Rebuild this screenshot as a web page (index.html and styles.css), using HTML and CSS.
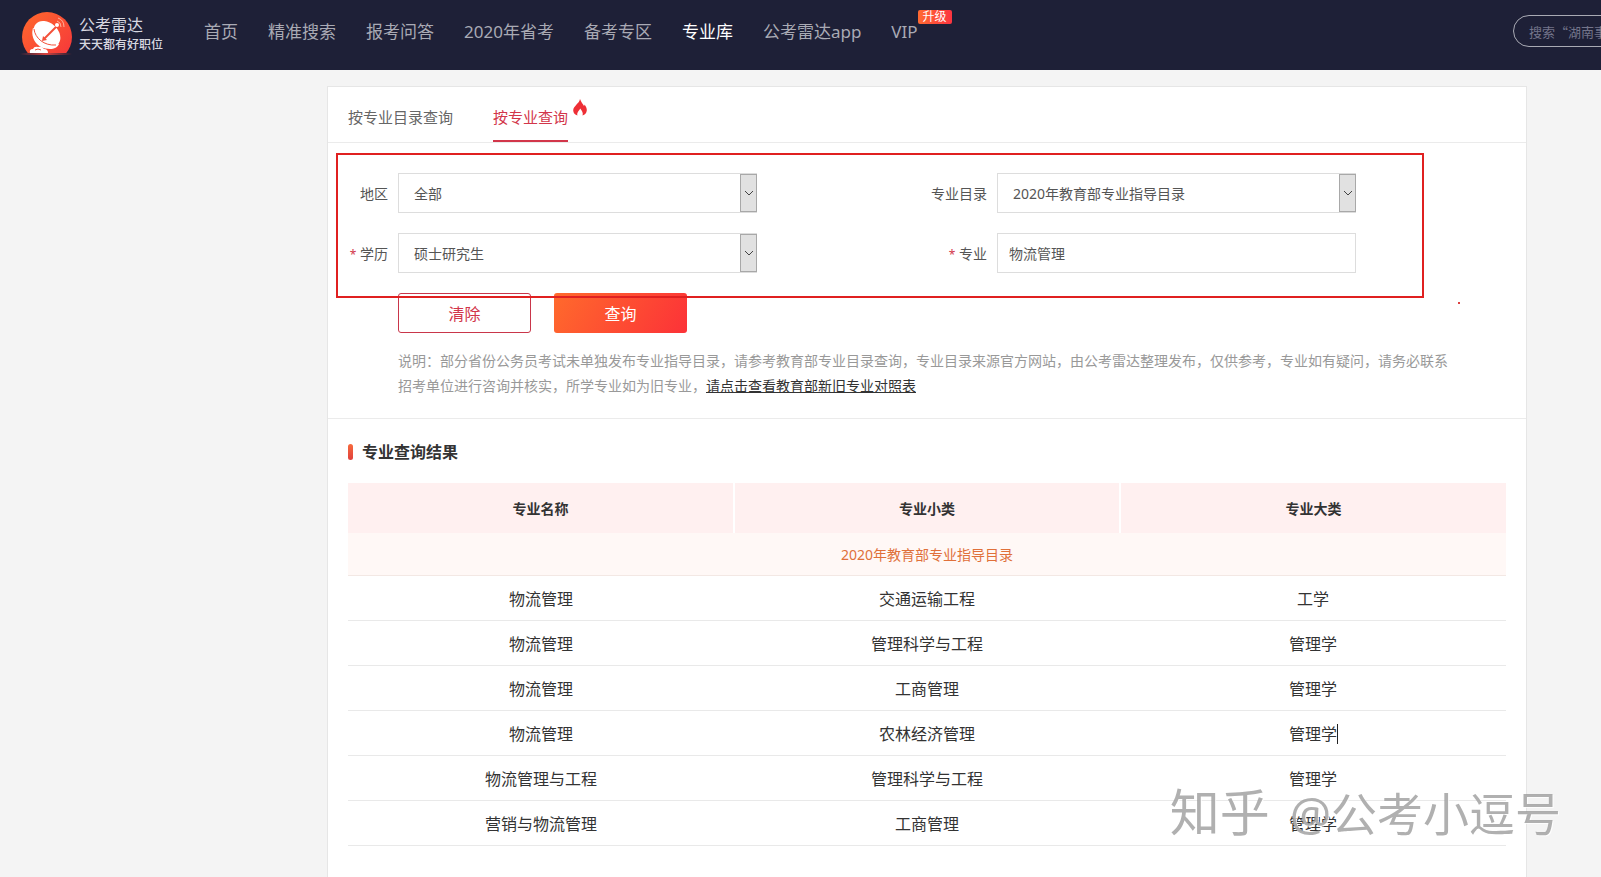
FILE: index.html
```html
<!DOCTYPE html>
<html lang="zh-CN">
<head>
<meta charset="utf-8">
<title>专业库 - 公考雷达</title>
<link rel="stylesheet" href="styles.css">
</head>
<body>
<header class="header">
  <a class="logo" href="#">
    <svg class="logo-mark" width="54" height="46" viewBox="0 0 54 46">
      <defs>
        <linearGradient id="sun" x1="0" y1="0" x2="1" y2="1"><stop offset="0" stop-color="#ff6a2c"/><stop offset="1" stop-color="#f5333c"/></linearGradient>
        <clipPath id="horizon"><rect width="54" height="41"/></clipPath>
      </defs>
      <g clip-path="url(#horizon)">
        <circle cx="27" cy="25" r="25" fill="url(#sun)"/>
        <path d="M10 41Q9 37 13 37Q14 34 18 35Q22 34 24 37Q28 37 28 41Z" fill="#fff"/>
        <path d="M15 38Q18 36 21 38" fill="none" stroke="#f4513a"/>
        <path d="M13 16C10 26 17 37 30 37C34 37 38 35 39 32Z" fill="#fff"/>
        <ellipse cx="27" cy="22" rx="15" ry="11" transform="rotate(42 27 22)" fill="#fff"/>
        <path d="M14 17C15 26 24 34 36 33" fill="none" stroke="#f4513a" stroke-width="1"/>
        <path d="M24 27L37 14" stroke="#f4513a" stroke-width="2"/>
        <path d="M23 24L27 28L22 29Z" fill="#f4513a"/>
        <circle cx="37" cy="13" r="2" fill="#fff"/>
        <path d="M37 9Q41 10 41 15M38 6Q44 8 44 15" fill="none" stroke="#ffb49c" stroke-width="1"/>
      </g>
      <path d="M0 42L26 41L52 42L26 43Z" fill="#d9433f"/>
    </svg>
    <span class="logo-text"><span class="logo-name">公考雷达</span><span class="logo-slogan">天天都有好职位</span></span>
  </a>
  <nav class="nav">
    <a href="#">首页</a>
    <a href="#">精准搜索</a>
    <a href="#">报考问答</a>
    <a href="#">2020年省考</a>
    <a href="#">备考专区</a>
    <a class="active" href="#">专业库</a>
    <a href="#">公考雷达app</a>
    <a class="vip" href="#">VIP<span class="badge">升级</span></a>
  </nav>
  <input class="search" type="search" aria-label="搜索" placeholder="搜索“湖南事业单位”">
</header>

<main class="card">
  <div class="tabs">
    <a class="tab" href="#">按专业目录查询</a>
    <a class="tab tab-active" href="#">按专业查询
      <svg class="fire" width="14" height="17" viewBox="0 0 14 17"><path d="M7 0C8 3 10 5 11 7C11.500 6.500 11.500 6 11.500 5.500C13 7.500 14 9.500 13.800 11.500C13.500 14 12 16 9.500 16.500C10.500 14 9 12 7.200 9.500C6 12 3.500 13.500 4.500 16.500C2 15.800 .3 14 .2 11.500C.1 9 2 7.500 3.500 5.500C5 4 6.500 2.500 7 0Z" fill="#ee2f36"/></svg>
    </a>
  </div>

  <form class="query">
    <div class="fields">
      <div class="field">
        <label for="area">地区</label>
        <span class="control select"><select id="area"><option>全部</option></select><span class="arrow"><svg width="10" height="6" viewBox="0 0 10 6"><path d="M1 1L5 5L9 1" fill="none" stroke="#444"/></svg></span></span>
      </div>
      <div class="field">
        <label for="catalog">专业目录</label>
        <span class="control select"><select id="catalog"><option>2020年教育部专业指导目录</option></select><span class="arrow"><svg width="10" height="6" viewBox="0 0 10 6"><path d="M1 1L5 5L9 1" fill="none" stroke="#444"/></svg></span></span>
      </div>
      <div class="field">
        <label for="degree"><span class="required">*</span> 学历</label>
        <span class="control select"><select id="degree"><option>硕士研究生</option></select><span class="arrow"><svg width="10" height="6" viewBox="0 0 10 6"><path d="M1 1L5 5L9 1" fill="none" stroke="#444"/></svg></span></span>
      </div>
      <div class="field">
        <label for="major"><span class="required">*</span> 专业</label>
        <span class="control"><input id="major" type="text" value="物流管理"></span>
      </div>
    </div>
    <div class="actions">
      <button class="btn btn-clear" type="reset">清除</button>
      <button class="btn btn-query" type="button">查询</button>
    </div>
    <p class="note">说明：部分省份公务员考试未单独发布专业指导目录，请参考教育部专业目录查询，专业目录来源官方网站，由公考雷达整理发布，仅供参考，专业如有疑问，请务必联系招考单位进行咨询并核实，所学专业如为旧专业，<a href="#">请点击查看教育部新旧专业对照表</a></p>
    <span class="highlight"></span>
    <span class="dot"></span>
  </form>

  <section class="results">
    <h2>专业查询结果</h2>
    <table>
      <thead>
        <tr><th>专业名称</th><th>专业小类</th><th>专业大类</th></tr>
      </thead>
      <tbody>
        <tr class="group"><td colspan="3">2020年教育部专业指导目录</td></tr>
        <tr><td>物流管理</td><td>交通运输工程</td><td>工学</td></tr>
        <tr><td>物流管理</td><td>管理科学与工程</td><td>管理学</td></tr>
        <tr><td>物流管理</td><td>工商管理</td><td>管理学</td></tr>
        <tr><td>物流管理</td><td>农林经济管理</td><td><span class="caret">管理学</span></td></tr>
        <tr><td>物流管理与工程</td><td>管理科学与工程</td><td>管理学</td></tr>
        <tr><td>营销与物流管理</td><td>工商管理</td><td>管理学</td></tr>
      </tbody>
    </table>
  </section>
</main>
<div class="watermark"><span class="watermark-site">知乎</span> @公考小逗号</div>
</body>
</html>
```
FILE: styles.css
```css
* { box-sizing: border-box; }
body {
  margin: 0;
  min-height: 100vh;
  display: flex;
  flex-direction: column;
  overflow: hidden;
  background: #f4f4f4;
  color: #333;
  font: 14px/20px "Noto Sans", "Noto Sans CJK SC", sans-serif;
}
a { color: inherit; text-decoration: none; }
input, select, button { font: inherit; color: inherit; }

.header {
  display: flex;
  align-items: flex-start;
  height: 70px;
  padding-left: 20px;
  background: #1e2037;
  overflow: hidden;
}
.logo { display: flex; gap: 5px; padding-top: 12px; width: 184px; flex: none; }
.logo-mark { flex: none; }
.logo-text { display: flex; flex-direction: column; padding-top: 3px; color: #d8d8e0; }
.logo-name { font-size: 16px; line-height: 20px; }
.logo-slogan { font-size: 12px; line-height: 20px; font-weight: 500; }
.nav { display: flex; gap: 30px; flex: none; font-size: 17px; line-height: 64px; color: #a9aab4; }
.nav .active { color: #fff; }
.vip { position: relative; }
.badge {
  position: absolute;
  left: 100%;
  top: 10px;
  width: 34px;
  border-radius: 2px;
  background: linear-gradient(90deg, #ff6a32, #fc3440);
  color: #fff;
  font-size: 12px;
  line-height: 14px;
  text-align: center;
}
.search {
  flex: none;
  width: 240px;
  height: 32px;
  margin: 15px -152px 0 auto;
  padding: 0 15px;
  border: 1px solid #a9aab4;
  border-radius: 16px;
  background: transparent;
  font: 13px/20px "Noto Sans CJK SC", sans-serif;
}
.search::placeholder { color: #73748a; }

.card {
  flex: 1;
  max-width: 1200px;
  width: 75%;
  margin: 16px 0 0 327px;
  border: 1px solid #e6e6e6;
  border-bottom: 0;
  background: #fff;
}
.tabs {
  display: flex;
  gap: 40px;
  padding: 0 20px;
  height: 56px;
  border-bottom: 1px solid #ebebeb;
  font-size: 15px;
  line-height: 60px;
  color: #666;
}
.tab { height: 55px; }
.tab-active { position: relative; color: #d2364a; border-bottom: 2px solid #d2364a; }
.fire { position: absolute; left: calc(100% + 5px); top: 12px; }

.query { position: relative; padding: 30px 0 20px; border-bottom: 1px solid #ebebeb; }
.fields { display: grid; grid-template-columns: 1fr 1fr; gap: 20px 0; }
.field { display: flex; align-items: center; gap: 10px; color: #555; }
.field label { width: 60px; padding-top: 2px; text-align: right; white-space: nowrap; }
.required { color: #d2364a; font-size: 12px; }
.control { position: relative; width: 60%; height: 40px; }
.control select, .control input {
  display: block;
  width: 100%;
  height: 100%;
  padding: 2px 24px 0 15px;
  border: 1px solid #ddd;
  border-radius: 0;
  background: #fff;
  appearance: none;
}
.control input { padding: 0 11px; }
.arrow {
  position: absolute;
  right: 0;
  top: 1px;
  bottom: 1px;
  width: 17px;
  display: flex;
  align-items: center;
  justify-content: center;
  border: 1px solid #a8a8a8;
  background: #e1e1e1;
  pointer-events: none;
}
.actions { display: flex; gap: 23px; margin: 20px 0 0 70px; }
.btn { width: 133px; height: 40px; padding: 2px 0 0; border-radius: 3px; font-size: 16px; }
.btn-clear { border: 1px solid #c9364a; background: #fff; color: #d2364a; }
.btn-query { border: 0; background: linear-gradient(120deg, #ff6a2c, #fc3238); color: #fff; }
.note { max-width: 1060px; margin: 15px 0 0 70px; line-height: 25px; color: #999; font-family: "Noto Sans CJK SC", sans-serif; }
.note a { color: #333; text-decoration: underline; }
.highlight { position: absolute; left: 8px; right: 102px; top: 10px; height: 145px; border: 2px solid #e02020; pointer-events: none; }
.dot { position: absolute; right: 66px; top: 159px; width: 2px; height: 2px; background: #dc4040; }

.results { padding: 20px; }
.results h2 { display: flex; align-items: center; gap: 9px; margin: 0 0 18px; font-size: 16px; line-height: 26px; font-weight: 600; }
.results h2::before { content: ""; width: 5px; height: 16px; border-radius: 3px; background: linear-gradient(#f76a3c, #e0403c); }
table { width: 100%; border-collapse: collapse; table-layout: fixed; text-align: center; }
th { height: 50px; padding: 2px 0 0; background: #fff0f0; background-clip: padding-box; border-right: 2px solid #fff; font-weight: 700; }
th:last-child { border-right: 0; }
td { height: 45px; padding: 2px 0 0; border-bottom: 1px solid #e9e9e9; font-size: 16px; }
.group td { height: 42px; background: #fff8f6; border-bottom-color: #f3e8e4; color: #e0703a; font-size: 14px; }
.caret { display: inline-block; margin-right: -1px; border-right: 1px solid #222; }

.watermark {
  position: fixed;
  right: 40px;
  bottom: 32px;
  font-size: 46px;
  line-height: 64px;
  color: rgba(150, 150, 150, .75);
  text-shadow: 1px 1px 0 rgba(255, 255, 255, .8);
  white-space: nowrap;
  pointer-events: none;
}
.watermark-site { margin-right: 8px; font-size: 50px; }
```
